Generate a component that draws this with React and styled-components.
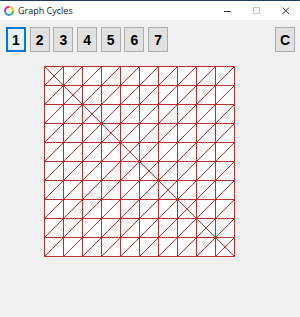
import React from "react";
import styled, { createGlobalStyle } from "styled-components";

const GlobalStyle = createGlobalStyle`
  html, body {
    margin: 0;
    padding: 0;
    background: #f0f0f0;
  }
`;

const N = 10;
const CELL = 19;
const buttons = ["1", "2", "3", "4", "5", "6", "7"];

const Window = styled.div`
  width: 300px;
  height: 317px;
  display: flex;
  flex-direction: column;
  background: #f0f0f0;
  overflow: hidden;
`;

const TitleBar = styled.div`
  height: 19px;
  border-top: 1px solid #1f3c68;
  background: #ffffff;
  display: flex;
  align-items: center;
  padding-left: 4px;
`;

const Title = styled.span`
  font-family: "Open Sans", "Noto Sans", sans-serif;
  font-size: 9px;
  color: #222;
  margin-left: 4px;
  flex: 1;
`;

const Controls = styled.div`
  display: flex;
  align-items: center;
`;

const Control = styled.div`
  width: 29px;
  height: 19px;
  display: flex;
  align-items: center;
  justify-content: center;
`;

const Toolbar = styled.div`
  display: flex;
  gap: 3.7px;
  padding: 7px 5px 0 6px;
`;

const Btn = styled.button`
  width: 20px;
  height: 25px;
  padding: 0;
  box-sizing: border-box;
  border: 1px solid ${(p) => (p.$active ? "#0078d7" : "#adadad")};
  background: ${(p) => (p.$active ? "#e5f1fb" : "#e1e1e1")};
  box-shadow: ${(p) => (p.$active ? "inset 0 0 0 1px #0078d7" : "none")};
  font-family: "Liberation Sans", Arial, sans-serif;
  font-weight: bold;
  font-size: 14px;
  color: #000;
  display: flex;
  align-items: center;
  justify-content: center;
`;

const Spacer = styled.div`
  flex: 1;
`;

const Board = styled.svg`
  display: block;
  margin: 14px 0 0 44px;
`;

function AppIcon() {
  return (
    <svg width="10" height="10" viewBox="0 0 10 10">
      <path d="M5 1 A4 4 0 0 1 9 5" stroke="#f4c20d" strokeWidth="2" fill="none" />
      <path d="M9 5 A4 4 0 0 1 5 9" stroke="#3cba54" strokeWidth="2" fill="none" />
      <path d="M5 9 A4 4 0 0 1 1 5" stroke="#4285f4" strokeWidth="2" fill="none" />
      <path d="M1 5 A4 4 0 0 1 5 1" stroke="#d61ec6" strokeWidth="2" fill="none" />
    </svg>
  );
}

function Grid() {
  const size = N * CELL;
  const lines = [];
  for (let i = 0; i <= N; i++) {
    const p = 0.5 + i * CELL;
    lines.push(<line key={"v" + i} x1={p} y1={0.5} x2={p} y2={size + 0.5} />);
    lines.push(<line key={"h" + i} x1={0.5} y1={p} x2={size + 0.5} y2={p} />);
  }
  for (let r = 0; r < N; r++) {
    for (let c = 0; c < N; c++) {
      const x = 0.5 + c * CELL;
      const y = 0.5 + r * CELL;
      lines.push(<line key={`d${r}-${c}`} x1={x} y1={y + CELL} x2={x + CELL} y2={y} />);
      if (r === c) {
        lines.push(<line key={`x${r}`} x1={x} y1={y} x2={x + CELL} y2={y + CELL} />);
      }
    }
  }
  return (
    <Board width={size + 1} height={size + 1}>
      <rect x="0.5" y="0.5" width={size} height={size} fill="#ffffff" />
      <g stroke="#b83030" strokeWidth="1">{lines}</g>
    </Board>
  );
}

export default function App() {
  return (
    <>
      <GlobalStyle />
      <Window>
        <TitleBar>
          <AppIcon />
          <Title>Graph Cycles</Title>
          <Controls>
            <Control>
              <svg width="8" height="8"><line x1="0" y1="4.5" x2="7" y2="4.5" stroke="#333" /></svg>
            </Control>
            <Control>
              <svg width="8" height="8"><rect x="0.5" y="0.5" width="6" height="6" fill="none" stroke="#c8c8c8" /></svg>
            </Control>
            <Control>
              <svg width="8" height="8">
                <path d="M0.5 0.5 L7 7 M7 0.5 L0.5 7" stroke="#333" />
              </svg>
            </Control>
          </Controls>
        </TitleBar>
        <Toolbar>
          {buttons.map((b, i) => (
            <Btn key={b} $active={i === 0}>{b}</Btn>
          ))}
          <Spacer />
          <Btn>C</Btn>
        </Toolbar>
        <Grid />
      </Window>
    </>
  );
}
